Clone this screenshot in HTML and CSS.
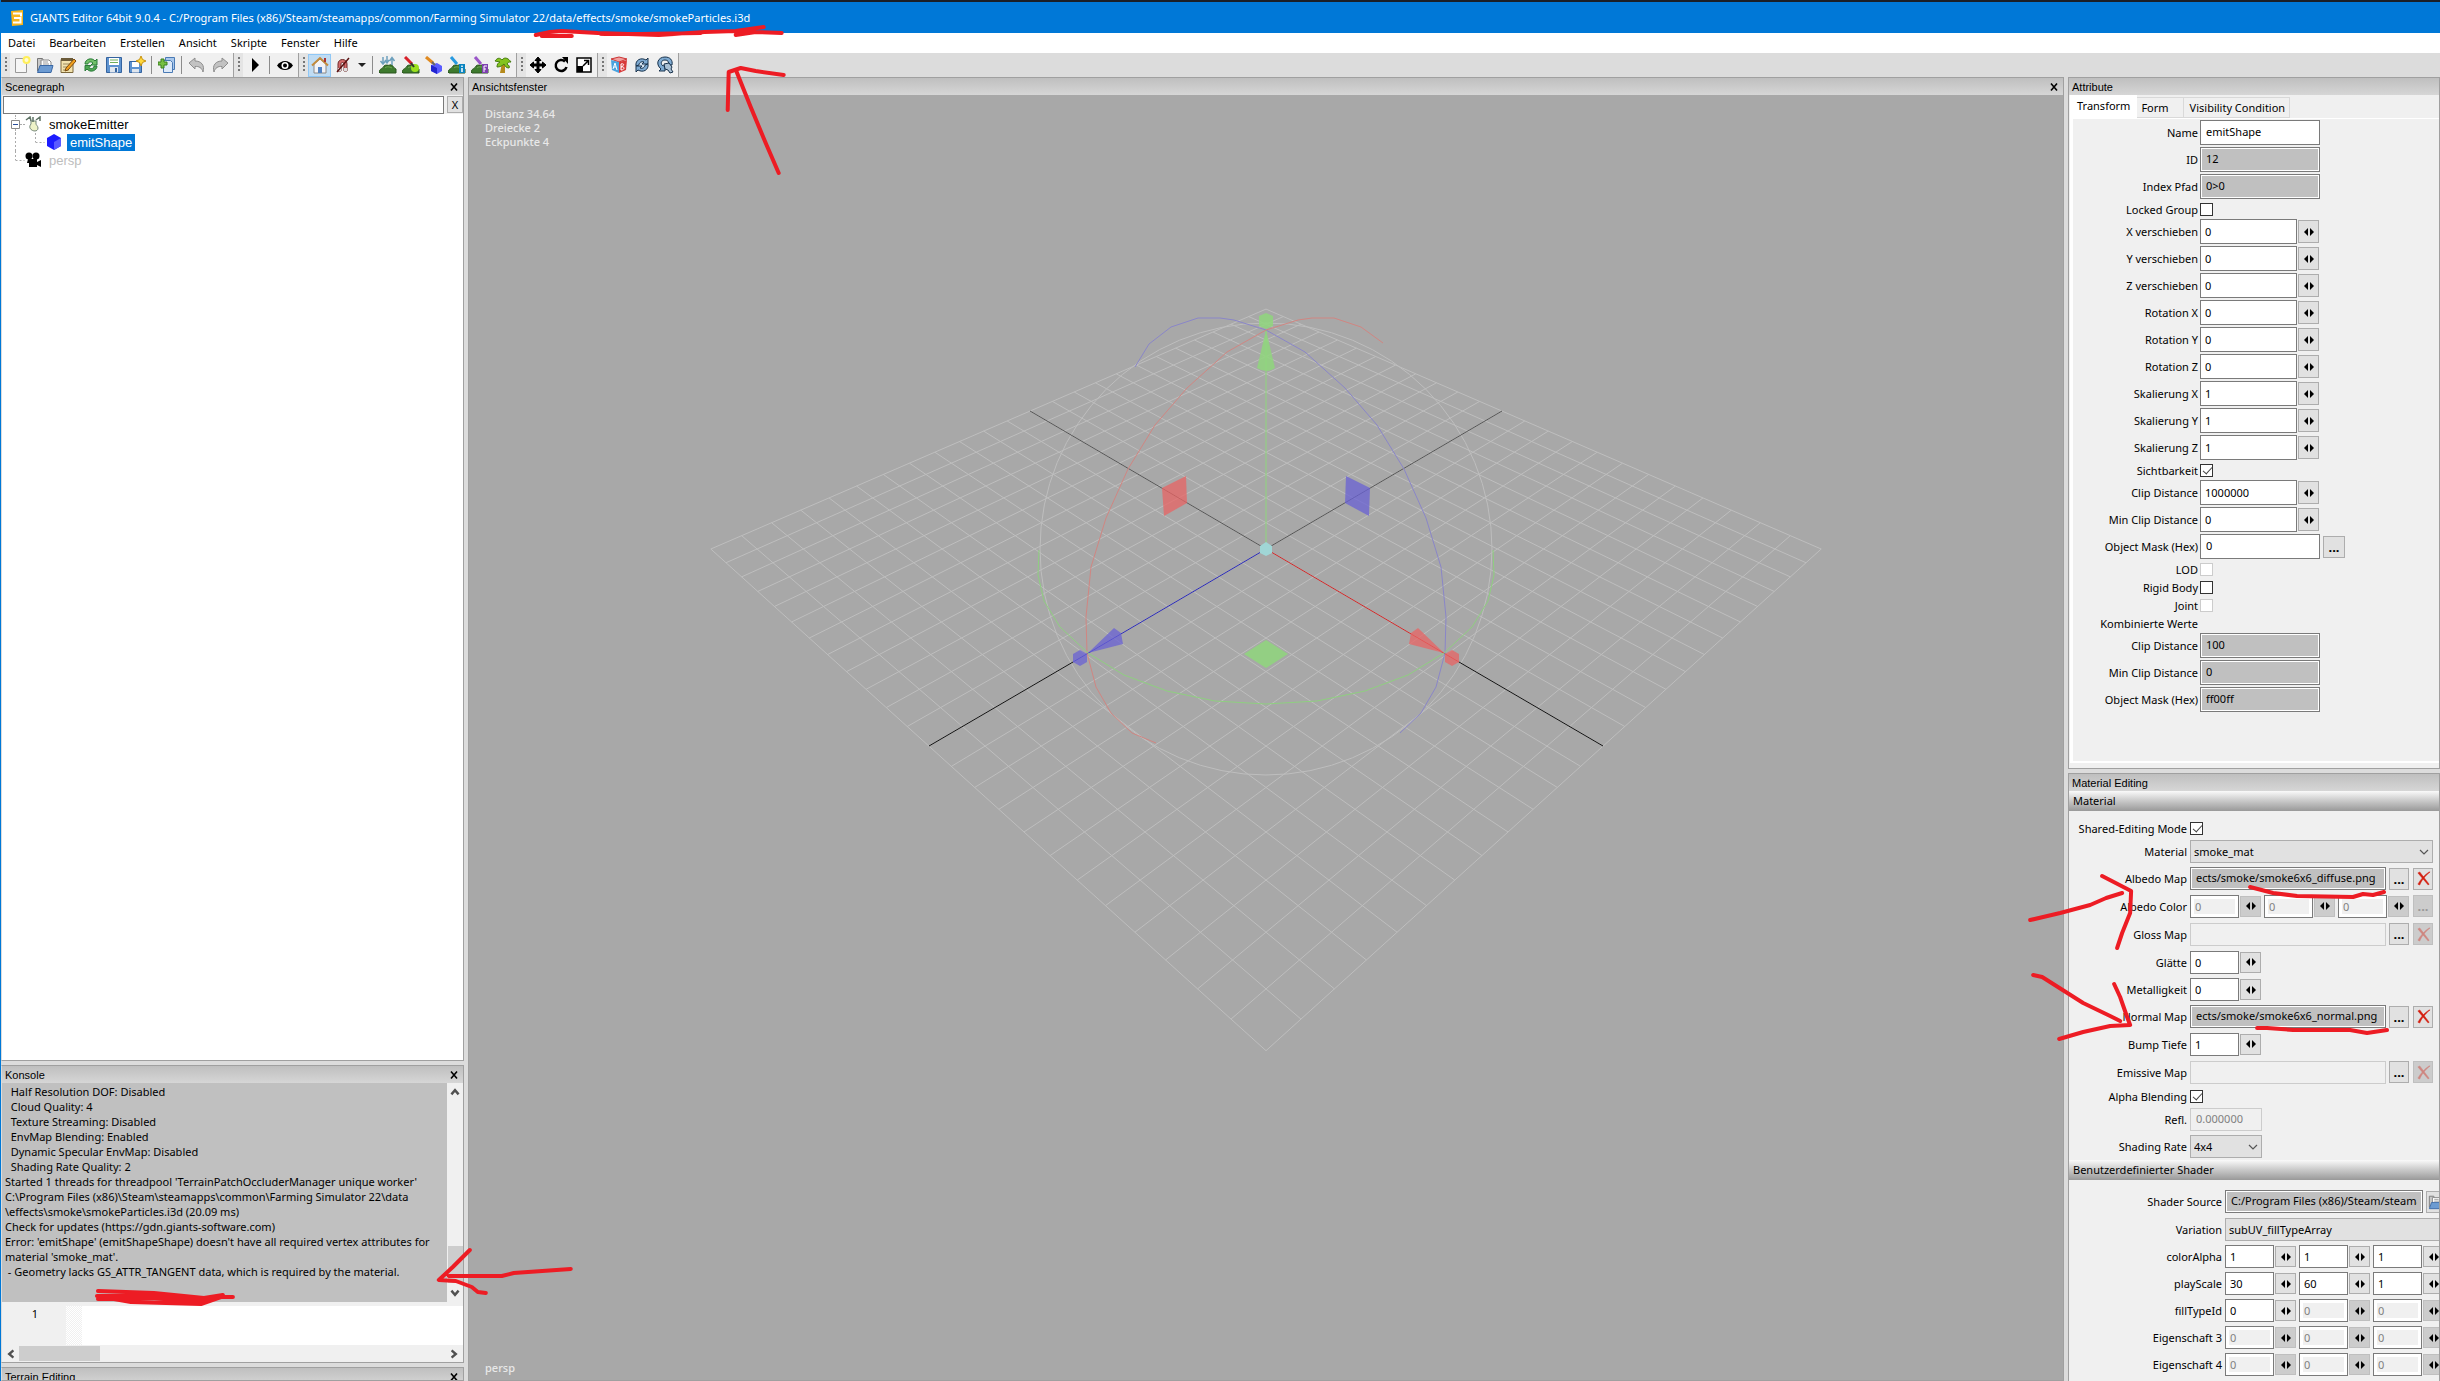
FILE: index.html
```
<!DOCTYPE html>
<html lang="de">
<head>
  <meta charset="UTF-8" />
  <meta name="viewport" content="width=device-width, initial-scale=1.0" />
  <title>GIANTS Editor 64bit 9.0.4</title>
  <link rel="stylesheet" href="styles.css">
</head>
<body>
  <!-- Icons -->
  <svg class="defs" aria-hidden="true">
    <symbol id="i-new" viewBox="0 0 18 18"><path d="M2.500 2.500h11v14h-11z" fill="#f6f6f6" stroke="#999"/><circle cx="13.500" cy="4" r="4" fill="#ffef5a"/><circle cx="13.500" cy="4" r="2" fill="#fffbd0"/></symbol>
    <symbol id="i-open" viewBox="0 0 18 18"><path d="M1.500 15V2.500h5l1 2" fill="#c9c9c9" stroke="#777"/><path d="M5 4h8l2 2v5H5z" fill="#fff" stroke="#888"/><path d="M7 6h5M7 8h6" stroke="#999"/><path d="M4 9.500h13l-2 7H1.500z" fill="#6c9bd2" stroke="#3a68a5"/></symbol>
    <symbol id="i-edit" viewBox="0 0 18 18"><path d="M2 3.500h12v13H2z" fill="#f2e2ae" stroke="#7c683b"/><path d="M2 2h12v3H2z" fill="#6b5b3a"/><path d="M4 8h7M4 11h5M4 14h6" stroke="#9a8a60"/><path d="M7 12l8-9 2 2-8 9-3 1z" fill="#f0a020" stroke="#7a4a10"/></symbol>
    <symbol id="i-reload" viewBox="0 0 18 18"><path d="M3 8c0-5 7-7 10-3l2-2v6H9l2-2c-2-2-5-1-5 1z" fill="#72c06a" stroke="#287a38"/><path d="M15 10c0 5-7 7-10 3l-2 2V9.500h6l-2 2c2 2 5 1 5-1.500z" fill="#4ea653" stroke="#287a38"/></symbol>
    <symbol id="i-save" viewBox="0 0 18 18"><path d="M1.500 1.500h15v15h-15z" fill="#5e93d0" stroke="#34639f"/><path d="M4 2h10v7H4z" fill="#fff"/><path d="M5 4h8M5 6.500h8" stroke="#6fae5a"/><path d="M5 11h8v5.500H5z" fill="#dfe6ee"/><path d="M10 12h2v4h-2z" fill="#34639f"/></symbol>
    <symbol id="i-saveas" viewBox="0 0 18 18"><path d="M1.500 5.500h12v11h-12z" fill="#5e93d0" stroke="#34639f"/><path d="M4 6h7v5H4z" fill="#fff"/><path d="M4 13h7v3.500H4z" fill="#dfe6ee"/><path d="M13 0l1.500 3.500L18 5l-3.500 1.500L13 10l-1.500-3.500L8 5l3.500-1.500z" fill="#ffd83a" stroke="#c89210"/></symbol>
    <symbol id="i-import" viewBox="0 0 18 18"><path d="M7.500 1.500h9v12h-9z" fill="#a9c8ec" stroke="#4a7ab5"/><path d="M5.500 4.500h7l2 2v10h-9z" fill="#dce9f8" stroke="#4a7ab5"/><path d="M3 3h3v3h3v3H6v3H3V9H0V6h3z" fill="#77c043" stroke="#3a8020"/></symbol>
    <symbol id="i-undo" viewBox="0 0 18 18"><path d="M1 7l6-5v3c6 0 10 4 8 11-1-4-4-6-8-5.500V13z" fill="#c2c2c2" stroke="#8d8d8d"/></symbol>
    <symbol id="i-redo" viewBox="0 0 18 18"><path d="M17 7l-6-5v3C5 5 1 9 3 16c1-4 4-6 8-5.500V13z" fill="#c2c2c2" stroke="#8d8d8d"/></symbol>
    <symbol id="i-play" viewBox="0 0 18 18"><path d="M6 2v14l7-7z"/></symbol>
    <symbol id="i-eye" viewBox="0 0 18 18"><path d="M1 9.500c4-6 12-6 16 0-4 6-12 6-16 0z"/><circle cx="9" cy="9.500" r="3.500" fill="#fff"/><circle cx="9" cy="9.500" r="2"/></symbol>
    <symbol id="i-home" viewBox="0 0 18 18"><path d="M3 8v9h12V8L9 3z" fill="#f3f3f6" stroke="#888"/><path d="M1 9.500L9 2l8 7.500" fill="none" stroke="#c38b3c" stroke-width="2"/><path d="M7 11h4v6H7z" fill="#4f82c4"/><path d="M13 2h2v4h-2z" fill="#a33"/></symbol>
    <symbol id="i-magnet" viewBox="0 0 18 18"><path d="M4 15V8c0-6 9-6 9 0v7h-3V8c0-2-3-2-3 0v7z" fill="#d46a6a" stroke="#6e2a2a"/><path d="M4 12h3v3H4zM10 12h3v3h-3z" fill="#ddd"/><path d="M3 16L15 2" stroke="#5a1010" stroke-width="1.500"/></symbol>
    <symbol id="i-hill" viewBox="0 0 18 18"><path d="M0 16c1-4 4-3 5-6 2-2 4 0 6-1 3-1 3 3 6 4v4H1z" fill="#3e7a2e" stroke="#28551c"/><path d="M6 12c2-2 5-1 7 0" stroke="#75ac55" fill="none"/></symbol>
    <symbol id="i-sculpt" viewBox="0 0 18 18"><use href="#i-hill"/><path d="M4 1v6M1.500 5L4 8l2.500-3M8 0v6M6 4l2 3 2-3M13 9V2M10.500 5L13 1.500 15.500 5" fill="none" stroke="#6da0bd" stroke-width="1.500"/></symbol>
    <symbol id="i-paint" viewBox="0 0 18 18"><use href="#i-hill"/><circle cx="13" cy="12" r="4" fill="#9be01e"/><path d="M3 1l7 7" stroke="#d8202a" stroke-width="3"/><path d="M9 7l3 4" stroke="#333" stroke-width="2"/></symbol>
    <symbol id="i-cubepaint" viewBox="0 0 18 18"><path d="M6 9l6-2 5 3v5l-5 3-6-3z" fill="#5a5cff"/><path d="M6 9l6 3v6l-6-3z" fill="#2224d0"/><path d="M1 1l7 6" stroke="#e08a20" stroke-width="3"/><path d="M7 6l3 3" stroke="#666" stroke-width="2"/></symbol>
    <symbol id="i-info" viewBox="0 0 18 18"><use href="#i-hill"/><path d="M3 1l6 7" stroke="#279ae0" stroke-width="3"/><path d="M11 8h6v9h-6z" fill="#0a84c0"/><path d="M14 9.500v1.500M14 12v4" stroke="#fff" stroke-width="1.500"/></symbol>
    <symbol id="i-foliage" viewBox="0 0 18 18"><use href="#i-hill"/><path d="M4 1l6 7" stroke="#9a55c8" stroke-width="3"/><path d="M11 8h6v9h-6z" fill="#7e3fb0"/><path d="M13 16v-6h3M13 13h2" stroke="#fff" fill="none"/></symbol>
    <symbol id="i-tree" viewBox="0 0 18 18"><path d="M8 7h3v10H6z" fill="#b58a1c"/><path d="M1 5c3-4 5-3 7-1 3-4 7-1 9 2-2 0-3 0-4 2 2 1 3 3 2 4-3 0-4-2-5-4-2 2-4 3-7 3 0-3 1-4 3-5z" fill="#84c41e" stroke="#477c10"/></symbol>
    <symbol id="i-move" viewBox="0 0 18 18"><path d="M9 1l3 3.500h-2V8h3.500V6L17 9l-3.500 3v-2H10v3.500h2L9 17l-3-3.500h2V10H4.500v2L1 9l3.500-3v2H8V4.500H6z" stroke="#000"/></symbol>
    <symbol id="i-rotate" viewBox="0 0 18 18"><path d="M13 5.500A5.500 5.500 0 1 0 14.500 11" fill="none" stroke="#000" stroke-width="2.500"/><path d="M10 1h6v7z"/></symbol>
    <symbol id="i-scale" viewBox="0 0 18 18"><path d="M2 2h14v14H2z" fill="#fff" stroke="#000" stroke-width="1.500"/><path d="M2 10h6v6H2z"/><path d="M8 10l5-5M9 4.500h4.500V9" fill="none" stroke="#000" stroke-width="1.500"/></symbol>
    <symbol id="i-ab" viewBox="0 0 18 18"><path d="M1 3l8-2 8 2-8 3z" fill="#f0a0a0" stroke="#c33"/><path d="M1 4l8 2v11l-7-3z" fill="#4aa3e0"/><path d="M17 4L9 6v11l7-3z" fill="#d83a3a"/><path d="M3 13l2-6 2 7M4 11h2M11 8v6M11 8c4-1 3 2 0 3 4-1 4 3 0 3" fill="none" stroke="#fff"/></symbol>
    <symbol id="i-sync" viewBox="0 0 18 18"><circle cx="9" cy="9" r="6" fill="#d5e3f0"/><path d="M3 10c-1-6 5-9 10-6l2-2v6H9l2-2c-3-1-5 1-5 3z" fill="#7fabd2" stroke="#18324c"/><path d="M15 8c1 6-5 9-10 6l-2 2v-6h6l-2 2c3 1 5-1 5-3z" fill="#7fabd2" stroke="#18324c"/></symbol>
    <symbol id="i-sync2" viewBox="0 0 18 18"><path d="M5 13C-1 8 2 1 9 1c5 0 8 3 7 8h-3c0-3-1-5-4-5-4 0-5 4-2 6l2-1v6H3z" fill="#7fabd2" stroke="#18324c"/><path d="M8 8l5-1 3 4-1 2 2 3-3 1-2-3-3-1z" fill="#a9c0d4" stroke="#18324c"/></symbol>
    <symbol id="i-spin" viewBox="0 0 12 8"><path d="M5 0v8L1 4zM7 0v8l4-4z"/></symbol>
    <symbol id="i-close" viewBox="0 0 12 12"><path d="M3 2.500l6 7M9 2.500l-6 7" stroke="#000" stroke-width="1.600"/></symbol>
    <symbol id="i-del" viewBox="0 0 16 16"><path d="M2 2l2-1 10 13-1 1zM15 1C9 6 6 10 4 15l-2-1C5 9 9 4 14 1z" fill="#d41f10" stroke="#d41f10" stroke-width="0.500"/></symbol>
    <symbol id="i-chev" viewBox="0 0 10 6"><path d="M1 1l4 4 4-4" fill="none" stroke="#555" stroke-width="1.200"/></symbol>
    <symbol id="i-arrow" viewBox="0 0 10 10"><path d="M2 7l3-3.500L8 7" fill="none" stroke="#505050" stroke-width="2"/></symbol>
  </svg>

  <div class="app">
    <header class="titlebar">
      <svg class="logo" viewBox="0 0 14 16"><path d="M1 1l12-1v15l-11 1z" fill="#f7b51c"/><path d="M3 3.500h8v3M4 8h6.500v4.500H3" fill="none" stroke="#fff" stroke-width="2"/></svg>
      <span>GIANTS Editor 64bit 9.0.4 - C:/Program Files (x86)/Steam/steamapps/common/Farming Simulator 22/data/effects/smoke/smokeParticles.i3d</span>
    </header>
    <nav class="menubar">
      <a href="#">Datei</a><a href="#">Bearbeiten</a><a href="#">Erstellen</a><a href="#">Ansicht</a><a href="#">Skripte</a><a href="#">Fenster</a><a href="#">Hilfe</a>
    </nav>
    <div class="toolbar">
      <div class="tools">
        <i class="grip"></i>
        <button aria-label="Neu"><svg><use href="#i-new"/></svg></button>
        <button aria-label="Öffnen"><svg><use href="#i-open"/></svg></button>
        <button aria-label="Editieren"><svg><use href="#i-edit"/></svg></button>
        <button aria-label="Neu laden"><svg><use href="#i-reload"/></svg></button>
        <button aria-label="Speichern"><svg><use href="#i-save"/></svg></button>
        <button aria-label="Speichern unter"><svg><use href="#i-saveas"/></svg></button>
        <i class="sep"></i>
        <button aria-label="Importieren"><svg><use href="#i-import"/></svg></button>
        <i class="sep"></i>
        <button aria-label="Rückgängig"><svg><use href="#i-undo"/></svg></button>
        <button aria-label="Wiederholen"><svg><use href="#i-redo"/></svg></button>
      </div>
      <div class="tools">
        <i class="grip"></i>
        <button aria-label="Abspielen"><svg><use href="#i-play"/></svg></button>
        <i class="sep"></i>
        <button aria-label="Anzeigen"><svg><use href="#i-eye"/></svg></button>
      </div>
      <div class="tools">
        <i class="grip"></i>
        <button class="on" aria-label="Lokal"><svg><use href="#i-home"/></svg></button>
        <button aria-label="Magnet"><svg><use href="#i-magnet"/></svg></button>
        <button class="drop" aria-label="Magnet Optionen"><b></b></button>
        <i class="sep"></i>
        <button aria-label="Terrain formen"><svg><use href="#i-sculpt"/></svg></button>
        <button aria-label="Terrain malen"><svg><use href="#i-paint"/></svg></button>
        <button aria-label="Objekt malen"><svg><use href="#i-cubepaint"/></svg></button>
        <button aria-label="Info Layer"><svg><use href="#i-info"/></svg></button>
        <button aria-label="Foliage"><svg><use href="#i-foliage"/></svg></button>
        <button aria-label="Baum"><svg><use href="#i-tree"/></svg></button>
      </div>
      <div class="tools">
        <i class="grip"></i>
        <button aria-label="Verschieben"><svg><use href="#i-move"/></svg></button>
        <button aria-label="Drehen"><svg><use href="#i-rotate"/></svg></button>
        <button aria-label="Skalieren"><svg><use href="#i-scale"/></svg></button>
      </div>
      <div class="tools">
        <i class="grip"></i>
        <button aria-label="Texte"><svg><use href="#i-ab"/></svg></button>
        <button aria-label="Sync"><svg><use href="#i-sync"/></svg></button>
        <button aria-label="Sync Objekt"><svg><use href="#i-sync2"/></svg></button>
      </div>
    </div>

    <main class="workspace">
      <div class="column left">
        <section class="panel scenegraph">
          <h2>Scenegraph <button class="close" aria-label="Schließen"><svg><use href="#i-close"/></svg></button></h2>
          <div class="filter">
            <input type="text" aria-label="Filter" />
            <button>X</button>
          </div>
          <ul class="tree">
            <li>
              <svg class="lines" viewBox="0 0 20 18"><path d="M10.500 0v4M10.500 14v4M15 9.500h5" stroke="#aaa" stroke-dasharray="2 1"/><path d="M6.500 5.500h8v8h-8z" fill="#fff" stroke="#8a8a8a"/><path d="M8 9.500h5" stroke="#2a4f9c"/></svg>
              <svg class="node" viewBox="0 0 16 16"><path d="M6 5v3c-5 6 7 10 7 4 0-2-2-3-2-4V5z" fill="#eef3c8" stroke="#75877a"/><path d="M1 4l4-3 1 4M8 1v5M11 4l4-3v4" fill="none" stroke="#5f7466" stroke-width="1.500"/></svg>
              <span>smokeEmitter</span>
            </li>
            <li>
              <svg class="lines deep" viewBox="0 0 41 18"><path d="M10.500 0v18M30.500 0v9M30.500 9.500h9" fill="none" stroke="#aaa" stroke-dasharray="2 2"/></svg>
              <svg class="node" viewBox="0 0 16 16"><path d="M8 0l7 4v8l-7 4-7-4V4z" fill="#1c1cff"/><path d="M8 8l7-4v8l-7 4z" fill="#5a5aff"/></svg>
              <span class="selected">emitShape</span>
            </li>
            <li>
              <svg class="lines" viewBox="0 0 20 18"><path d="M10.500 0v9M10.500 9.500h9" fill="none" stroke="#aaa" stroke-dasharray="2 2"/></svg>
              <svg class="node" viewBox="0 0 16 16"><circle cx="4" cy="4" r="3.500"/><circle cx="11" cy="4" r="3.500"/><path d="M3 7h9v3l4-2v7l-4-2v2H4v-4H2z"/></svg>
              <span class="muted">persp</span>
            </li>
          </ul>
        </section>

        <section class="panel console">
          <h2>Konsole <button class="close" aria-label="Schließen"><svg><use href="#i-close"/></svg></button></h2>
          <div class="output">
            <pre>  Half Resolution DOF: Disabled
  Cloud Quality: 4
  Texture Streaming: Disabled
  EnvMap Blending: Enabled
  Dynamic Specular EnvMap: Disabled
  Shading Rate Quality: 2
Started 1 threads for threadpool 'TerrainPatchOccluderManager unique worker'
C:\Program Files (x86)\Steam\steamapps\common\Farming Simulator 22\data
\effects\smoke\smokeParticles.i3d (20.09 ms)
Check for updates (https://gdn.giants-software.com)
Error: 'emitShape' (emitShapeShape) doesn't have all required vertex attributes for
material 'smoke_mat'.
 - Geometry lacks GS_ATTR_TANGENT data, which is required by the material.</pre>
            <div class="scroll-v"><svg><use href="#i-arrow"/></svg><b></b><svg class="down"><use href="#i-arrow"/></svg></div>
          </div>
          <div class="editor"><span class="lineno">1</span><span class="fold"></span><textarea aria-label="Befehl"></textarea></div>
          <div class="scroll-h"><svg class="to-left"><use href="#i-arrow"/></svg><b></b><svg class="to-right"><use href="#i-arrow"/></svg></div>
        </section>

        <section class="panel terrain">
          <h2>Terrain Editing <button class="close" aria-label="Schließen"><svg><use href="#i-close"/></svg></button></h2>
        </section>
      </div>

      <section class="panel view">
        <h2>Ansichtsfenster <button class="close" aria-label="Schließen"><svg><use href="#i-close"/></svg></button></h2>
        <div class="canvas">
          <svg class="scene" viewBox="-797 -454 1594 1285" preserveAspectRatio="xMidYMid meet">
            <g id="grid" stroke="#bebebe"></g>
            <circle r="226" fill="none" stroke="#bebebe"/>
            <g fill="none">
              <path d="M-236-138L0 0L236-138" stroke="#555"/>
              <path d="M-193 113L-337 197M193 113L337 197" stroke="#111"/>
              <path d="M0 0L-193 113" stroke="#2a2ab8"/>
              <path d="M0 0L193 113" stroke="#d02828"/>
              <path d="M0 0V-219" stroke="#8fd67c"/>
              <polyline stroke="#8a86c8" points="-131,-182 -117,-205 -95,-222 -68,-231 -46,-231 -32,-229 0,-219 39,-197 79,-161 111,-124 138,-80 160,-31 175,18 180,68 179,104 170,138 155,164 134,184"/>
              <polyline stroke="#d08682" points="117,-206 95,-222 68,-231 46,-231 32,-229 0,-219 -39,-197 -79,-161 -111,-124 -138,-80 -160,-31 -175,18 -180,68 -179,104 -170,138 -155,164 -134,184 -110,194"/>
              <polyline stroke="#8fcf80" points="-227,1 -228,26 -222,52 -206,78 -178,104 -142,126 -99,142 -51,152 0,155 51,152 99,142 142,126 178,104 206,78 222,52 228,26 227,1"/>
            </g>
            <g fill="#8fd67c" fill-opacity="0.850">
              <path d="M0-219L9-181Q0-175-9-181z"/><path d="M-7-233L0-236L7-233V-223L0-220L-7-223z"/><path d="M0 91L22 105L0 119L-22 105z"/>
            </g>
            <g fill="#e86464" fill-opacity="0.750">
              <path d="M-104-61L-80-73L-79-46L-102-33z"/><path d="M178 104L152 79L145 84L143 95z"/><path d="M186 101L193 105V113L186 117L179 113V105z"/>
            </g>
            <g fill="#6a62d4" fill-opacity="0.750">
              <path d="M104-61L80-73L79-46L103-33z"/><path d="M-178 104L-152 79L-145 84L-143 95z"/><path d="M-186 101L-193 105V113L-186 117L-179 113V105z"/>
            </g>
            <path d="M0-7L6-3V4L0 7L-6 4V-3z" fill="#a0d6d6"/>
          </svg>
          <div class="stats">Distanz 34.64<br>Dreiecke 2<br>Eckpunkte 4</div>
          <div class="camera">persp</div>
        </div>
      </section>

      <div class="column right">
        <section class="panel attributes">
          <h2>Attribute</h2>
          <div class="tabs"><button class="active">Transform</button><button>Form</button><button>Visibility Condition</button></div>
          <div class="form" id="transform">
            <div class="row"><label for="name">Name</label><input type="text" id="name" value="emitShape"></div>
            <div class="row"><label for="nid">ID</label><input type="text" id="nid" value="12" readonly></div>
            <div class="row"><label for="path">Index Pfad</label><input type="text" id="path" value="0&gt;0" readonly></div>
            <div class="row check"><label for="locked">Locked Group</label><input type="checkbox" id="locked"></div>
            <div class="row"><label for="tx">X verschieben</label><input type="text" class="num" id="tx" value="0"><button class="spin" aria-label="ändern"><svg><use href="#i-spin"/></svg></button></div>
            <div class="row"><label for="ty">Y verschieben</label><input type="text" class="num" id="ty" value="0"><button class="spin" aria-label="ändern"><svg><use href="#i-spin"/></svg></button></div>
            <div class="row"><label for="tz">Z verschieben</label><input type="text" class="num" id="tz" value="0"><button class="spin" aria-label="ändern"><svg><use href="#i-spin"/></svg></button></div>
            <div class="row"><label for="rx">Rotation X</label><input type="text" class="num" id="rx" value="0"><button class="spin" aria-label="ändern"><svg><use href="#i-spin"/></svg></button></div>
            <div class="row"><label for="ry">Rotation Y</label><input type="text" class="num" id="ry" value="0"><button class="spin" aria-label="ändern"><svg><use href="#i-spin"/></svg></button></div>
            <div class="row"><label for="rz">Rotation Z</label><input type="text" class="num" id="rz" value="0"><button class="spin" aria-label="ändern"><svg><use href="#i-spin"/></svg></button></div>
            <div class="row"><label for="sx">Skalierung X</label><input type="text" class="num" id="sx" value="1"><button class="spin" aria-label="ändern"><svg><use href="#i-spin"/></svg></button></div>
            <div class="row"><label for="sy">Skalierung Y</label><input type="text" class="num" id="sy" value="1"><button class="spin" aria-label="ändern"><svg><use href="#i-spin"/></svg></button></div>
            <div class="row"><label for="sz">Skalierung Z</label><input type="text" class="num" id="sz" value="1"><button class="spin" aria-label="ändern"><svg><use href="#i-spin"/></svg></button></div>
            <div class="row check"><label for="visible">Sichtbarkeit</label><input type="checkbox" id="visible" checked></div>
            <div class="row"><label for="clip">Clip Distance</label><input type="text" class="num" id="clip" value="1000000"><button class="spin" aria-label="ändern"><svg><use href="#i-spin"/></svg></button></div>
            <div class="row"><label for="minclip">Min Clip Distance</label><input type="text" class="num" id="minclip" value="0"><button class="spin" aria-label="ändern"><svg><use href="#i-spin"/></svg></button></div>
            <div class="row"><label for="mask">Object Mask (Hex)</label><input type="text" id="mask" value="0"><button class="more">...</button></div>
            <div class="row check"><label for="lod">LOD</label><input type="checkbox" id="lod" disabled></div>
            <div class="row check"><label for="rigid">Rigid Body</label><input type="checkbox" id="rigid"></div>
            <div class="row check"><label for="joint">Joint</label><input type="checkbox" id="joint" disabled></div>
            <div class="row check"><span class="label">Kombinierte Werte</span></div>
            <div class="row"><label for="cclip">Clip Distance</label><input type="text" id="cclip" value="100" readonly></div>
            <div class="row"><label for="cmin">Min Clip Distance</label><input type="text" id="cmin" value="0" readonly></div>
            <div class="row"><label for="cmask">Object Mask (Hex)</label><input type="text" id="cmask" value="ff00ff" readonly></div>
          </div>
        </section>

        <section class="panel material">
          <h2>Material Editing</h2>
          <h3>Material</h3>
          <div class="form">
            <div class="row check"><label for="shared">Shared-Editing Mode</label><input type="checkbox" id="shared" checked></div>
            <div class="row"><label for="mat">Material</label><span class="select wide"><select id="mat"><option>smoke_mat</option></select><svg><use href="#i-chev"/></svg></span></div>
            <div class="row"><label for="albedo">Albedo Map</label><input type="text" class="map" id="albedo" value="ects/smoke/smoke6x6_diffuse.png" readonly><button class="more">...</button><button class="del" aria-label="Entfernen"><svg><use href="#i-del"/></svg></button></div>
            <div class="row tall"><label for="ar">Albedo Color</label><input type="text" class="num" id="ar" value="0" disabled><button class="spin" disabled aria-label="ändern"><svg><use href="#i-spin"/></svg></button><input type="text" class="num" aria-label="Grün" value="0" disabled><button class="spin" disabled aria-label="ändern"><svg><use href="#i-spin"/></svg></button><input type="text" class="num" aria-label="Blau" value="0" disabled><button class="spin" disabled aria-label="ändern"><svg><use href="#i-spin"/></svg></button><button class="more" disabled>...</button></div>
            <div class="row tall"><label for="gloss">Gloss Map</label><input type="text" class="map" id="gloss" disabled><button class="more">...</button><button class="del" disabled aria-label="Entfernen"><svg><use href="#i-del"/></svg></button></div>
            <div class="row tall"><label for="smooth">Glätte</label><input type="text" class="num" id="smooth" value="0"><button class="spin" aria-label="ändern"><svg><use href="#i-spin"/></svg></button></div>
            <div class="row"><label for="metal">Metalligkeit</label><input type="text" class="num" id="metal" value="0"><button class="spin" aria-label="ändern"><svg><use href="#i-spin"/></svg></button></div>
            <div class="row"><label for="normal">Normal Map</label><input type="text" class="map" id="normal" value="ects/smoke/smoke6x6_normal.png" readonly><button class="more">...</button><button class="del" aria-label="Entfernen"><svg><use href="#i-del"/></svg></button></div>
            <div class="row tall"><label for="bump">Bump Tiefe</label><input type="text" class="num" id="bump" value="1"><button class="spin" aria-label="ändern"><svg><use href="#i-spin"/></svg></button></div>
            <div class="row tall"><label for="emissive">Emissive Map</label><input type="text" class="map" id="emissive" disabled><button class="more">...</button><button class="del" disabled aria-label="Entfernen"><svg><use href="#i-del"/></svg></button></div>
            <div class="row check"><label for="alpha">Alpha Blending</label><input type="checkbox" id="alpha" checked></div>
            <div class="row"><label for="refl">Refl.</label><input type="text" class="refl" id="refl" value="0.000000" disabled></div>
            <div class="row"><label for="rate">Shading Rate</label><span class="select"><select id="rate"><option>4x4</option></select><svg><use href="#i-chev"/></svg></span></div>
          </div>
          <h3>Benutzerdefinierter Shader</h3>
          <div class="form shader" id="shader">
            <div class="row"><label for="source">Shader Source</label><input type="text" class="map" id="source" value="C:/Program Files (x86)/Steam/steamapps/common/Farming Simulator 22/data/shaders" readonly><button class="more browse" aria-label="Öffnen"><svg><use href="#i-open"/></svg></button></div>
            <div class="row tall"><label for="variation">Variation</label><span class="select wide"><select id="variation"><option>subUV_fillTypeArray</option></select></span></div>
          </div>
        </section>
      </div>
    </main>

    <!-- Markierungen -->
    <svg class="marks" viewBox="0 0 2440 1381" preserveAspectRatio="none">
      <path d="M535 35L549 32L561 31L597 33L658 35L704 32L735 31L763 27M571 36H541M600 34L640 34L700 33M735 35L755 32L781 33"/>
      <path d="M727 110L728 72L740 68L755 71L783 75M736 72L750 107L765 143L778 173"/>
      <path d="M2030 920L2060 913L2090 905L2106 898L2122 893M2102 876L2131 891L2130 913L2122 933L2117 948"/>
      <path d="M2250 887L2273 893L2297 896L2353 897L2363 894L2373 895L2384 892"/>
      <path d="M2033 975L2042 977L2083 1003L2110 1016L2120 1021M2114 984L2120 997L2127 1017L2130 1025L2110 1026L2083 1032L2059 1039"/>
      <path d="M2257 1028L2267 1028L2293 1030L2350 1030L2367 1033L2387 1030"/>
      <path d="M97 1291L153 1293L203 1298L222 1295L208 1300L140 1296L96 1296L130 1302L200 1304L220 1297L232 1297M97 1299L150 1298L205 1302"/>
      <path d="M570 1269L513 1273L501 1276L448 1276M469 1250L452 1267L438 1280L455 1281L471 1287L477 1292L485 1293"/>
    </svg>
  </div>
  <script src="editor.js"></script>
</body>
</html>
```
FILE: styles.css
```
* {
  box-sizing: border-box;
}
body {
  margin: 0;
  background-color: #dcdcdc;
  font-family: "Noto Sans", "Open Sans", sans-serif;
  font-size: 11px;
  color: #000;
}
button, input, select, textarea {
  font: inherit;
  color: inherit;
  margin: 0;
}
button {
  padding: 0;
  flex: none;
}
.defs {
  position: absolute;
  width: 0;
  height: 0;
}
.app {
  position: relative;
  height: 100vh;
  display: flex;
  flex-direction: column;
  overflow: hidden;
  border-left: 1px solid #0078d7;
}

/* top bars */
.titlebar {
  height: 33px;
  display: flex;
  align-items: center;
  gap: 6px;
  padding-left: 9px;
  border-top: 2px solid #1b1f26;
  background-color: #0078d7;
  color: white;
  white-space: nowrap;
}
.logo {
  width: 14px;
  height: 16px;
}
.menubar {
  height: 20px;
  display: flex;
  background-color: white;
}
.menubar a {
  padding: 0 7px;
  line-height: 20px;
  color: #000;
  text-decoration: none;
}
.toolbar {
  height: 24px;
  display: flex;
}
.tools {
  display: flex;
  align-items: center;
  padding-right: 2px;
  background-color: #f0f0f0;
  border-right: 1px solid #a0a0a0;
}
.tools button {
  width: 23px;
  height: 23px;
  display: flex;
  align-items: center;
  justify-content: center;
  border: 1px solid transparent;
  background: none;
}
.tools svg {
  width: 18px;
  height: 18px;
  flex: none;
}
.tools .on {
  background-color: #c0dcf3;
  border-color: #90c8f6;
}
.tools .drop {
  width: 15px;
}
.drop b {
  border: 4px solid transparent;
  border-top-color: #222;
  border-bottom: 0;
}
.grip {
  width: 9px;
  height: 24px;
  background: repeating-linear-gradient(#777 0 2px, transparent 2px 4px) 4px 4px / 2px 16px no-repeat #e4e4e4;
}
.sep {
  width: 1px;
  height: 18px;
  margin: 0 3px;
  background-color: #8c8c8c;
}

/* docked panels */
.workspace {
  flex: 1;
  min-height: 0;
  display: flex;
  gap: 4px;
}
.column {
  display: flex;
  flex-direction: column;
  gap: 4px;
  min-height: 0;
}
.left {
  flex: none;
  width: 463px;
}
.right {
  flex: none;
  width: 372px;
}
.panel {
  border: 1px solid #a0a0a0;
  background-color: #f0f0f0;
  overflow: hidden;
  display: flex;
  flex-direction: column;
}
.left .panel {
  border-left-color: #dcdcdc;
}
.panel h2 {
  flex: none;
  height: 17px;
  margin: 0;
  padding: 0 3px;
  display: flex;
  align-items: center;
  justify-content: space-between;
  background: linear-gradient(#bfbfbf, #d6d6d6);
  font: 11px "Liberation Sans", Arial, sans-serif;
}
.close {
  width: 12px;
  height: 12px;
  border: 0;
  background: none;
}
.close svg {
  display: block;
  width: 12px;
  height: 12px;
}
.scenegraph {
  flex: 1;
}
.scenegraph, .tree {
  background-color: white;
}
.filter {
  display: flex;
  gap: 3px;
  padding: 1px 0 0 1px;
  background-color: #f0f0f0;
}
.filter input {
  flex: 1;
  height: 18px;
  border: 1px solid #7a7a7a;
}
.filter button {
  width: 16px;
  height: 17px;
  border: 1px solid #adadad;
  background-color: #e1e1e1;
  line-height: 15px;
}
.tree {
  list-style: none;
  margin: 0;
  padding: 1px 0 0 3px;
  font: 13px "Liberation Sans", Arial, sans-serif;
}
.tree li {
  height: 18px;
  display: flex;
  align-items: center;
}
.tree span {
  padding: 0 3px;
  margin-left: 5px;
  line-height: 17px;
}
.tree .lines {
  width: 20px;
  height: 18px;
}
.tree .deep {
  width: 41px;
}
.node {
  width: 16px;
  height: 16px;
}
.tree .selected {
  background-color: #0078d7;
  color: white;
}
.tree .muted {
  color: #bdbdbd;
}
.output {
  display: flex;
  height: 219px;
  margin-bottom: 4px;
}
.output pre {
  flex: 1;
  margin: 0;
  padding: 1px 3px;
  overflow: hidden;
  background-color: #c0c0c0;
  font-family: inherit;
  font-size: 11px;
  line-height: 15px;
}
.scroll-v {
  width: 16px;
  display: flex;
  flex-direction: column;
  align-items: center;
  padding: 3px 0;
}
.scroll-v svg, .scroll-h svg {
  flex: none;
  width: 12px;
  height: 12px;
}
.scroll-v b {
  width: 15px;
  height: 37px;
  margin: auto 0 4px;
  background-color: #cdcdcd;
}
.down {
  transform: rotate(180deg);
}
.to-left {
  transform: rotate(-90deg);
}
.to-right {
  transform: rotate(90deg);
  margin-left: auto;
}
.editor {
  display: flex;
  height: 39px;
}
.lineno {
  width: 64px;
  padding-right: 28px;
  text-align: right;
  line-height: 16px;
}
.fold {
  width: 16px;
  background: repeating-conic-gradient(#f0f0f0 0 25%, #fff 0 50%) 0 0 / 2px 2px;
}
.editor textarea {
  flex: 1;
  border: 0;
  resize: none;
}
.scroll-h {
  height: 17px;
  display: flex;
  align-items: center;
  padding: 0 3px;
}
.scroll-h b {
  width: 81px;
  height: 15px;
  margin-left: 2px;
  background-color: #cdcdcd;
}
.terrain {
  flex: none;
  height: 14px;
}

/* 3d view */
.view {
  flex: 1;
  min-width: 0;
}
.canvas {
  position: relative;
  flex: 1;
  min-height: 0;
  background-color: #a8a8a8;
}
.scene {
  position: absolute;
  width: 100%;
  height: 100%;
}
.stats, .camera {
  position: absolute;
  left: 16px;
  color: #e9e9e9;
  font-size: 11px;
  font-weight: 500;
  line-height: 14px;
}
.stats {
  top: 12px;
}
.camera {
  bottom: 5px;
}

/* forms */
.attributes {
  flex: none;
  height: 692px;
  padding-bottom: 5px;
}
.attributes .form {
  flex: 1;
  margin-left: 1px;
  border: 3px solid white;
  border-width: 1px 0 2px 3px;
}
.tabs {
  display: flex;
  align-items: flex-end;
  height: 23px;
  padding-left: 1px;
}
.tabs button {
  height: 21px;
  padding: 0 4px;
  border: 1px solid #d9d9d9;
  border-left: 0;
  background-color: #f0f0f0;
}
.tabs button:nth-child(2) {
  padding-right: 14px;
}
.tabs button:nth-child(3) {
  padding-left: 6px;
}
.tabs .active {
  height: 23px;
  padding: 0 7px 2px;
  border: 0;
  background-color: white;
}
.material {
  flex: 1;
  border-bottom: 0;
}
.panel h3 {
  flex: none;
  height: 20px;
  margin: 0;
  padding-left: 4px;
  background: linear-gradient(#fafafa, #c8c8c8 50%, #999);
  font-size: 11px;
  font-weight: normal;
  line-height: 19px;
}
.material .form {
  padding-top: 7px;
}
.material .shader {
  padding-top: 8px;
}
.row {
  height: 27px;
  display: flex;
  align-items: center;
  white-space: nowrap;
}
.row label, .label {
  flex: none;
  width: 125px;
  margin-right: 2px;
  text-align: right;
}
.check {
  height: 18px;
}
.material .check {
  height: 20px;
}
.tall {
  height: 28px;
}
.material label {
  width: 118px;
  margin-right: 3px;
}
.shader label {
  width: 153px;
}
.row input[type="text"] {
  flex: none;
  width: 120px;
  height: 25px;
  padding: 0 5px 2px;
  border: 1px solid #7a7a7a;
  background-color: white;
  outline: 0;
}
.row input[readonly] {
  background-color: #c0c0c0;
  box-shadow: inset 0 0 0 1px white;
}
.row input.num {
  width: 97px;
  padding: 0 4px;
}
.material .row input[type="text"] {
  height: 23px;
}
.material .row input.num {
  width: 49px;
}
.material .row input.map {
  width: 196px;
}
.shader .row input.map {
  width: 198px;
}
.material .row input.refl {
  width: 72px;
}
.row input:disabled {
  background-color: #f0f0f0;
  border-color: #ccc;
  color: #808080;
}
.row input.num:disabled {
  border-color: #7a7a7a;
  box-shadow: inset 0 0 0 3px white;
}
input[type="checkbox"] {
  appearance: none;
  width: 13px;
  height: 13px;
  border: 1px solid #333;
  background-color: white;
}
.row input[type="checkbox"]:disabled {
  background-color: white;
}
input[type="checkbox"]:checked::after {
  content: "";
  display: block;
  width: 4px;
  height: 8px;
  margin-left: 4px;
  border: solid #444;
  border-width: 0 1px 1px 0;
  transform: rotate(42deg);
}
.spin, .more, .del {
  display: flex;
  align-items: center;
  justify-content: center;
  border: 1px solid #adadad;
  background-color: #e1e1e1;
}
.spin {
  width: 21px;
  height: 23px;
  margin-left: 1px;
}
.material .spin {
  height: 21px;
}
.spin svg {
  width: 12px;
  height: 8px;
}
.spin + input {
  margin-left: 3px;
}
.spin:disabled, .more:disabled, .del:disabled {
  background-color: #ccc;
  border-color: #bfbfbf;
}
.more {
  width: 22px;
  height: 22px;
  margin-left: 3px;
  font-size: 13px;
  font-weight: bold;
}
.material .more {
  width: 20px;
}
.more:disabled {
  color: #999;
}
.spin + .more {
  margin-left: 4px;
}
.browse svg {
  flex: none;
  width: 16px;
  height: 18px;
}
.del {
  width: 20px;
  height: 22px;
  margin-left: 4px;
}
.del svg {
  width: 15px;
  height: 15px;
}
.del:disabled svg {
  opacity: 0.4;
}
.select {
  position: relative;
  flex: none;
  width: 72px;
  height: 23px;
}
.select.wide {
  width: 243px;
}
.select select {
  appearance: none;
  width: 100%;
  height: 100%;
  padding: 0 3px;
  border: 1px solid #adadad;
  border-radius: 0;
  background-color: #e1e1e1;
}
.select svg {
  position: absolute;
  top: 9px;
  right: 4px;
  width: 10px;
  height: 6px;
}

.marks {
  position: absolute;
  top: 0;
  left: 0;
  width: 100%;
  height: 100%;
  fill: none;
  stroke: #ed1c24;
  stroke-width: 4;
  stroke-linecap: round;
  stroke-linejoin: round;
  pointer-events: none;
}
```
FILE: editor.js
```
// perspective ground grid, 24 x 24 cells, origin in the middle
const HALF = 12;

function project(a, b) {
  const s = (a + b) / (2 * HALF);
  const t = (a - b) / (2 * HALF);
  const w = 1 - 0.353 * s;
  return [555.2 * t / w, 324.6 * s / w];
}

function addLine(from, to) {
  const line = document.createElementNS('http://www.w3.org/2000/svg', 'line');
  line.setAttribute('x1', from[0]);
  line.setAttribute('y1', from[1]);
  line.setAttribute('x2', to[0]);
  line.setAttribute('y2', to[1]);
  document.getElementById('grid').appendChild(line);
}

for (let i = -HALF; i <= HALF; i++) {
  addLine(project(i, -HALF), project(i, HALF));
  addLine(project(-HALF, i), project(HALF, i));
}

// shader parameters, null = component not used
const params = [
  ['colorAlpha', [1, 1, 1, 1]],
  ['playScale', [30, 60, 1, 1]],
  ['fillTypeId', [0, null, null, null]],
  ['Eigenschaft 3', [null, null, null, null]],
  ['Eigenschaft 4', [null, null, null, null]]
];

params.forEach(([name, values], n) => {
  const row = document.createElement('div');
  row.className = 'row';
  let html = `<label for="p${n}-0">${name}</label>`;
  values.forEach((v, i) => {
    const off = v === null ? 'disabled' : '';
    html += `<input type="text" class="num" id="p${n}-${i}" aria-label="${name}" value="${v === null ? 0 : v}" ${off}>`;
    html += `<button class="spin" aria-label="ändern" ${off}><svg><use href="#i-spin"/></svg></button>`;
  });
  row.innerHTML = html;
  document.getElementById('shader').appendChild(row);
});
```
